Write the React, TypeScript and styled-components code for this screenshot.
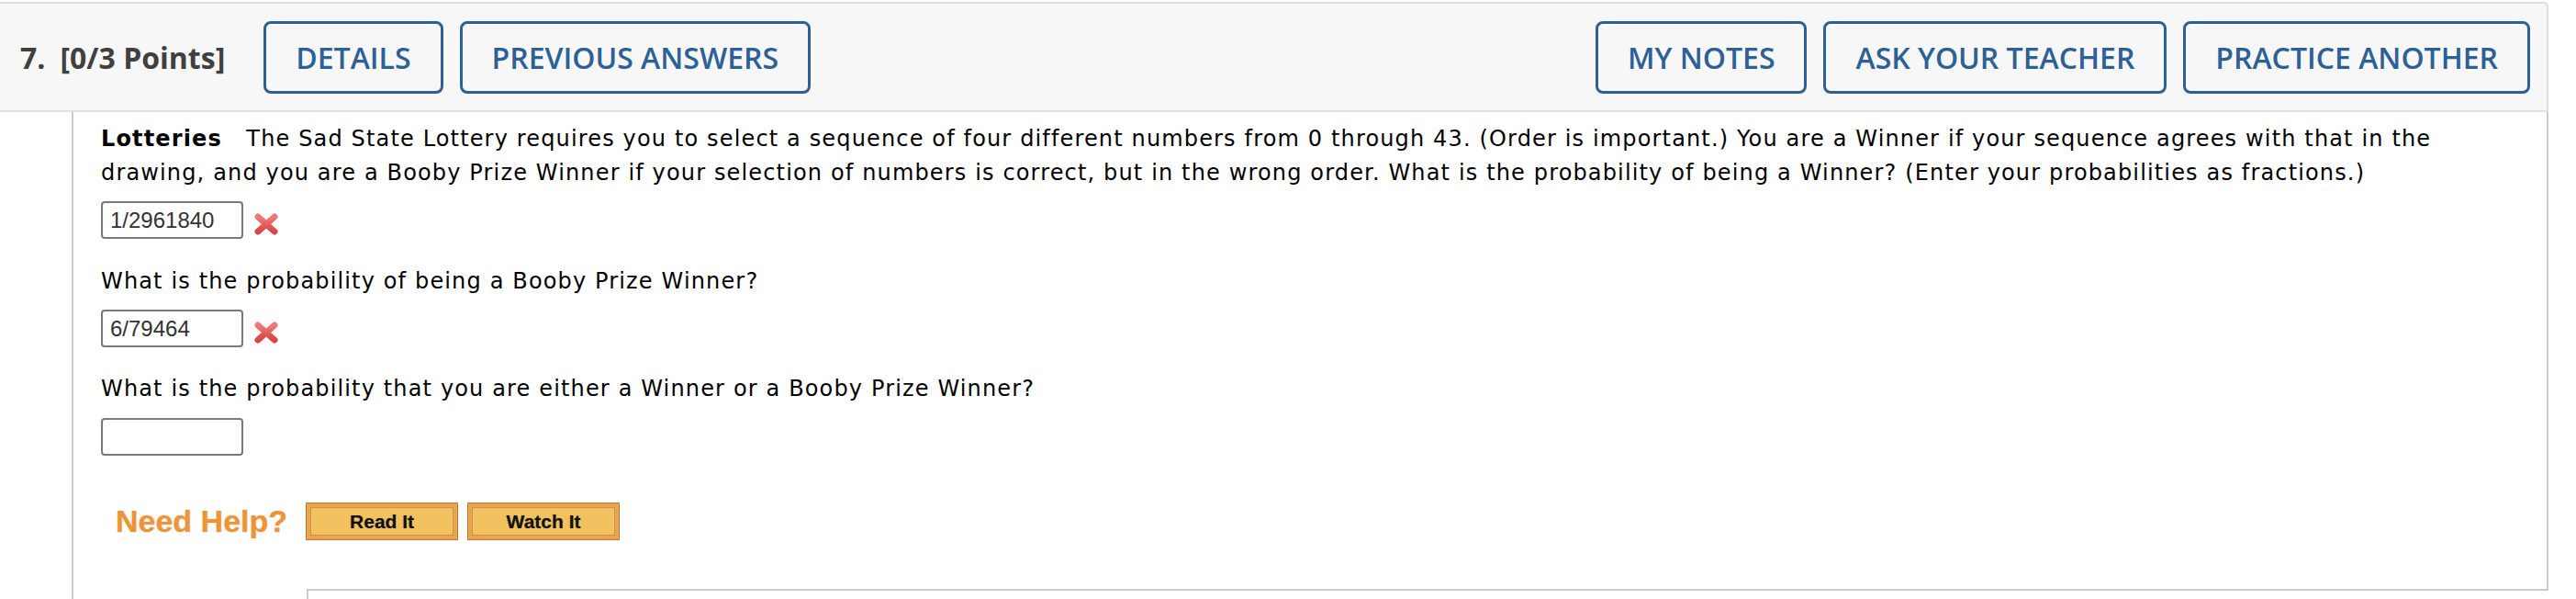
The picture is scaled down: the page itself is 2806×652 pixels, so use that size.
import React from 'react';
import styled, { createGlobalStyle } from 'styled-components';

const GlobalStyle = createGlobalStyle`
  html, body {
    margin: 0;
    padding: 0;
    background: #fff;
  }
`;

const Page = styled.div`
  width: 2776px;
  padding-top: 2px;
`;

const Header = styled.div`
  display: flex;
  align-items: center;
  height: 116px;
  padding: 0 18px 0 22px;
  background-color: #f7f7f7;
  border: 2px solid #dedede;
  border-left: none;
  border-top-right-radius: 5px;
`;

const Title = styled.div`
  display: flex;
  gap: 16px;
  font-family: 'Open Sans', sans-serif;
  font-weight: 700;
  font-size: 32px;
  color: #404040;
  white-space: nowrap;
  margin-right: 42px;
`;

const ButtonGroup = styled.div<{ $right?: boolean }>`
  display: flex;
  gap: 18px;
  margin-left: ${(p) => (p.$right ? 'auto' : '0')};
`;

const HeaderButton = styled.button`
  height: 79px;
  padding: 0 32px;
  background: transparent;
  border: 3px solid #2c6196;
  border-radius: 8px;
  color: #2c6196;
  font-family: 'Open Sans', sans-serif;
  font-weight: 600;
  font-size: 32px;
  text-transform: uppercase;
  white-space: nowrap;
  cursor: pointer;
`;

const Content = styled.div`
  margin-left: 78px;
  border-left: 2px solid #cccccc;
`;

const Question = styled.div`
  padding: 11px 40px 0 30px;
  border-right: 2px solid #cccccc;
  font-family: 'DejaVu Sans', Verdana, sans-serif;
  font-size: 24px;
  line-height: 37px;
  letter-spacing: 1.15px;
  color: #000;
  p {
    margin: 0;
  }
`;

const AnswerRow = styled.div<{ $top: number }>`
  display: flex;
  align-items: center;
  margin-top: ${(p) => p.$top}px;
  height: 41px;
`;

const AnswerBox = styled.input`
  box-sizing: border-box;
  width: 155px;
  height: 41px;
  padding: 0 8px;
  border: 2px solid #7a7a7a;
  border-radius: 4px;
  font-family: 'Liberation Sans', Arial, sans-serif;
  font-size: 24px;
  letter-spacing: 0;
  color: #333;
  background: #fff;
`;

const Wrong = styled.svg`
  margin-left: 10px;
  margin-top: 8px;
`;

const Prompt = styled.p<{ $top: number }>`
  margin-top: ${(p) => p.$top}px !important;
`;

const HelpRow = styled.div`
  display: flex;
  align-items: center;
  margin: 51px 0 0 16px;
  padding-bottom: 53px;
  gap: 10px;
  letter-spacing: 0;
`;

const NeedHelp = styled.span`
  font-family: 'Liberation Sans', Arial, sans-serif;
  font-weight: 700;
  font-size: 34px;
  color: #ec9439;
  text-shadow: 0 0 2px rgba(240, 160, 80, 0.6);
  margin-right: 10px;
`;

const HelpButton = styled.button`
  box-sizing: border-box;
  width: 166px;
  height: 41px;
  padding: 4px;
  background: #eda24b;
  border: 1px solid #b97a38;
  cursor: pointer;
  span {
    display: flex;
    align-items: center;
    justify-content: center;
    height: 100%;
    box-sizing: border-box;
    background: #f3c260;
    border: 1px solid #c59450;
    font-family: 'Liberation Sans', Arial, sans-serif;
    font-weight: 700;
    font-size: 21px;
    color: #111;
    text-shadow: 0 0 1px rgba(0, 0, 0, 0.4);
  }
`;

const Footer = styled.div`
  margin-left: 254px;
  height: 10px;
  border-top: 2px solid #cccccc;
  border-left: 2px solid #cccccc;
`;

function WrongMark() {
  return (
    <Wrong width="30" height="26" viewBox="0 0 30 26">
      <defs>
        <linearGradient id="xg" x1="0" y1="0" x2="0" y2="1">
          <stop offset="0" stopColor="#f07a7a" />
          <stop offset="1" stopColor="#d94444" />
        </linearGradient>
      </defs>
      <path d="M6 5 L24 21 M24 5 L6 21" stroke="url(#xg)" strokeWidth="7" strokeLinecap="round" />
    </Wrong>
  );
}

export default function App() {
  return (
    <>
      <GlobalStyle />
      <Page>
        <Header>
          <Title>
            <span>7.</span>
            <span>[0/3 Points]</span>
          </Title>
          <ButtonGroup>
            <HeaderButton>Details</HeaderButton>
            <HeaderButton>Previous Answers</HeaderButton>
          </ButtonGroup>
          <ButtonGroup $right>
            <HeaderButton>My Notes</HeaderButton>
            <HeaderButton>Ask Your Teacher</HeaderButton>
            <HeaderButton>Practice Another</HeaderButton>
          </ButtonGroup>
        </Header>
        <Content>
          <Question>
            <p>
              <b>Lotteries</b>
              {'\u00a0\u00a0 '}
              The Sad State Lottery requires you to select a sequence of four different numbers from 0 through 43. (Order is important.) You are a Winner if your sequence agrees with that in the drawing, and you are a Booby Prize Winner if your selection of numbers is correct, but in the wrong order. What is the probability of being a Winner? (Enter your probabilities as fractions.)
            </p>
            <AnswerRow $top={12}>
              <AnswerBox defaultValue="1/2961840" />
              <WrongMark />
            </AnswerRow>
            <Prompt $top={28}>What is the probability of being a Booby Prize Winner?</Prompt>
            <AnswerRow $top={12}>
              <AnswerBox defaultValue="6/79464" />
              <WrongMark />
            </AnswerRow>
            <Prompt $top={27}>What is the probability that you are either a Winner or a Booby Prize Winner?</Prompt>
            <AnswerRow $top={13}>
              <AnswerBox defaultValue="" />
            </AnswerRow>
            <HelpRow>
              <NeedHelp>Need Help?</NeedHelp>
              <HelpButton><span>Read It</span></HelpButton>
              <HelpButton><span>Watch It</span></HelpButton>
            </HelpRow>
          </Question>
          <Footer />
        </Content>
      </Page>
    </>
  );
}
